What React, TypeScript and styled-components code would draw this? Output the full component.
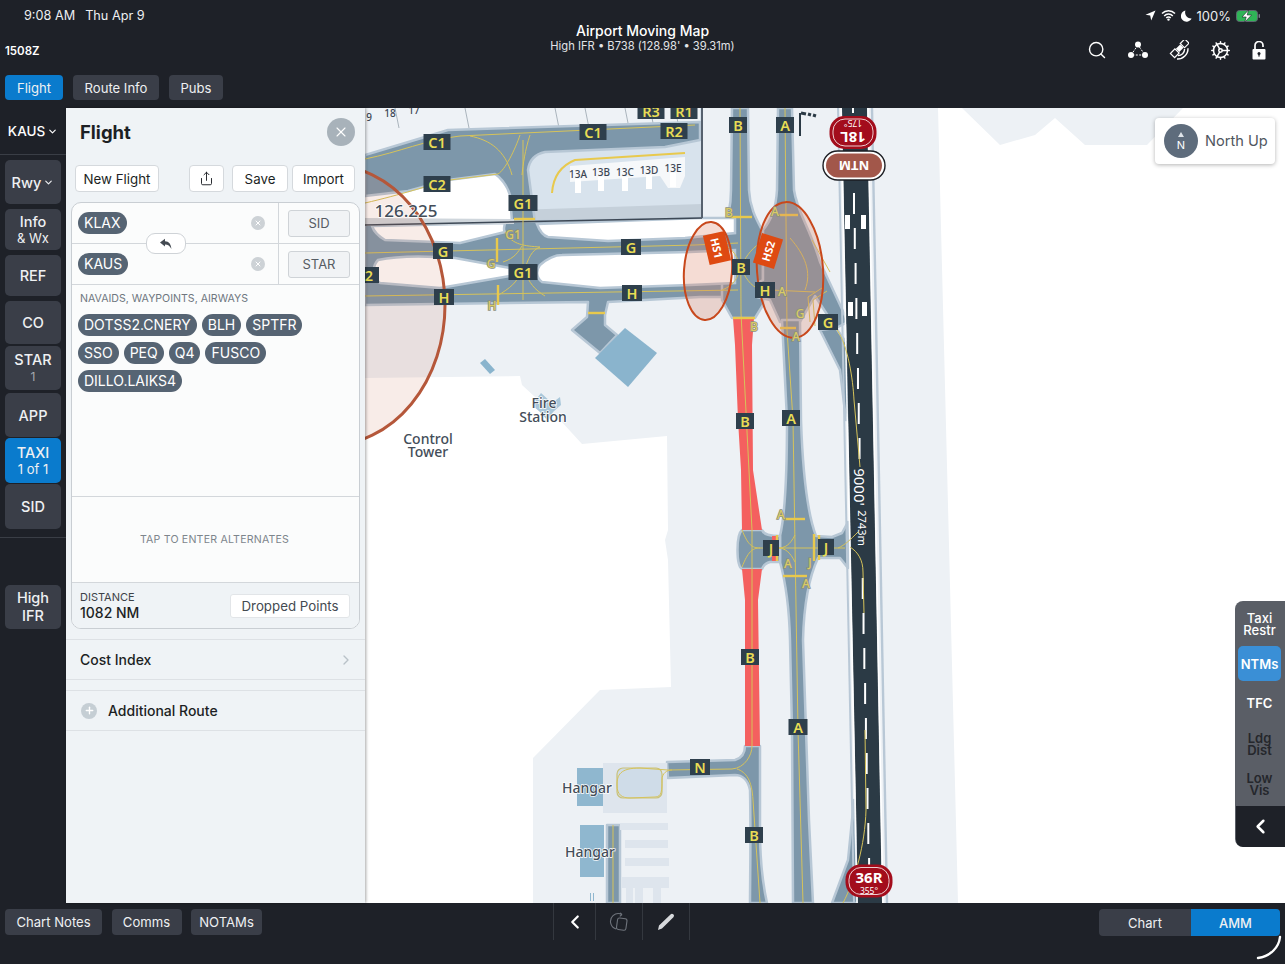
import React from "react";
import styled, { createGlobalStyle } from "styled-components";
import { ChevronDown, ChevronLeft, ChevronRight, Cog, Plus, Search, Share, X } from "lucide-react";

const GlobalStyle = createGlobalStyle`
  html, body {
    margin: 0;
    background: #1e2128;
  }
  * {
    box-sizing: border-box;
  }
`;

const RAIL_ITEMS = [
  { label: "Info", sub: "& Wx", h: 41, top: 5, solid: true },
  { label: "REF", h: 41, top: 5 },
  { label: "CO", h: 43, top: 5 },
  { label: "STAR", sub: "1", h: 44, top: 2 },
];

const ROUTE_ROWS = ["DOTSS2.CNERY", "BLH", "SPTFR", "SSO", "PEQ", "Q4", "FUSCO", "DILLO.LAIKS4"];

// dark taxiway signs: x, y, text, optional width
const SIGNS: [number, number, string, number?][] = [
  [437, 142, "C1"], [593, 132, "C1"], [651, 111, "R3"], [684, 111, "R1"], [674, 131, "R2"],
  [437, 184, "C2"], [523, 203, "G1", 29], [443, 251, "G", 20], [523, 272, "G1", 29], [631, 247, "G", 20],
  [444, 297, "H", 20], [632, 293, "H", 20], [369, 275, "2", 20], [738, 125, "B", 18], [785, 125, "A", 18],
  [741, 267, "B", 18], [765, 290, "H", 20], [828, 322, "G", 20], [745, 421, "B", 18], [791, 418, "A", 18],
  [771, 548, "J", 16], [826, 547, "J", 16], [750, 657, "B", 18], [798, 727, "A", 19], [700, 767, "N", 20],
  [754, 835, "B", 18],
];

const GROUND_LABELS: [number, number, string][] = [
  [513, 234, "G1"], [491, 263, "G"], [492, 305, "H"], [729, 212, "B"], [775, 211, "A"], [754, 326, "B"],
  [782, 291, "A"], [800, 313, "G"], [796, 336, "A"], [781, 514, "A"], [788, 563, "A"], [810, 562, "J"],
  [806, 583, "A"],
];

const GATES: [number, number, string][] = [
  [578, 174, "13A"], [601, 172, "13B"], [625, 172, "13C"], [649, 170, "13D"], [673, 168, "13E"],
];

const HOLD_BARS: [number, number, number, number][] = [
  [514, 219, 535, 219], [497, 238, 497, 262], [498, 285, 498, 305], [588, 313, 605, 313],
  [729, 217, 752, 217], [778, 215, 798, 215], [780, 328, 796, 328], [733, 318, 755, 318],
  [783, 519, 805, 519], [783, 576, 807, 576], [814, 534, 814, 561], [819, 535, 819, 560], [777, 535, 777, 561],
];

const CENTER_LINES = [
  "M365,159 C400,152 425,140 460,136 L695,125",
  "M365,203 C400,195 430,185 450,180 L498,174 C505,170 515,150 520,135 M523,140 L523,300",
  "M365,253 L695,245 L738,243 M365,296 L738,290",
  "M470,136 C490,140 505,150 512,175 M530,135 C525,150 523,165 522,175",
  "M505,232 C512,245 525,246 540,247 M503,262 C515,258 518,252 522,246 M540,247 C532,250 528,258 524,272",
  "M497,296 C510,288 518,282 520,272 M545,296 C535,290 528,282 526,272",
  "M740,108 L741,313 L752,530 L752,746 C752,755 745,768 732,769 L668,770 L640,768 C620,768 617,775 617,785 C617,795 622,798 630,798 L655,797 C662,797 662,790 662,780 C662,773 667,770 672,770",
  "M737,769 C746,772 752,780 753,800 L760,903",
  "M785,108 L787,330 L793,420 L798,730 L803,903",
  "M722,243 C735,250 737,258 741,267 M760,243 C750,250 745,258 741,267 M722,290 C735,285 737,278 741,267 M760,290 C750,285 745,278 741,267",
  "M742,530 C748,545 752,548 760,548 M742,567 C748,552 752,548 760,548 L845,548 M795,535 C790,545 785,548 778,548 M795,562 C790,552 785,548 778,548 M838,548 C845,545 850,540 858,532",
  "M812,240 L830,272 M790,238 C805,255 812,272 805,290 M770,290 L815,292",
  "M810,322 L808,297 L822,288 M815,326 L813,300 L827,291",
  "M613,825 L613,903",
  "M837,330 C848,345 853,380 854,400 L860,467 M850,547 C858,552 863,560 863,572 L864,613",
  "M865,730 L866,810 C865,845 855,880 843,903",
];

const ISLANDS = [
  "M372,226 L505,223 C504,228 503,230 505,232 L460,243 L385,240 C378,236 374,232 372,226 Z",
  "M378,260 C400,255 430,256 455,258 L510,268 L510,276 L440,288 L380,283 C372,278 372,266 378,260 Z",
  "M537,224 C540,232 544,236 548,237 L608,241 L685,238 L735,233 L735,218 L700,218 Z",
  "M540,265 C548,258 555,255 562,255 L690,252 L735,250 L735,283 L690,285 L600,288 L542,282 C536,278 536,270 540,265 Z",
];

const TAXIWAYS = [
  "M365,155 L448,130 L700,122 L700,140 L665,147 L545,152 Q530,155 528,170 L535,222 L512,222 L510,195 Q505,180 495,174 L448,180 L408,191 L365,196 Z",
  "M365,224 L740,218 L740,297 L700,297 L608,302 L605,315 L605,325 L617,335 L600,353 L572,330 L587,317 L588,302 L365,305 Z",
  "M732,108 L748,108 L749,190 C750,210 758,222 763,232 L763,305 L755,318 L732,318 L722,300 L722,232 C728,220 731,205 731,190 Z",
  "M778,108 L792,108 L794,190 C797,212 810,228 820,262 L848,322 L836,328 L815,296 L800,322 L780,322 L770,300 L757,297 L757,283 L763,280 L763,230 C770,222 776,208 777,190 Z",
  "M782,320 L800,320 L801,420 C803,480 808,515 816,536 L832,537 L842,533 L848,522 L848,568 L840,558 L818,558 C810,575 804,600 803,640 L806,730 L809,820 L813,903 L793,903 L792,730 L790,640 C789,600 785,580 780,562 L780,536 C785,515 787,480 787,420 Z",
  "M742,530 L762,530 C764,535 770,536 780,536 L780,562 L770,562 C766,563 763,566 762,569 L742,569 C736,565 736,535 742,530 Z",
  "M745,746 L760,746 L760,830 C760,860 763,885 767,903 L750,903 C750,880 751,840 750,790 C748,780 742,775 735,775 L668,778 L667,762 L735,760 C742,758 745,754 745,746 Z",
  "M820,330 L836,328 L848,345 L850,420 L846,420 L840,370 Z",
  "M832,903 L848,860 L854,800 L858,903 Z",
  "M607,825 L620,825 L620,903 L607,903 Z",
];

const RED_SEGMENTS = [
  "M733,318 L754,318 L752,345 L753,470 L762,530 L742,530 L741,470 L738,420 L735,345 Z",
  "M742,569 L762,569 L758,600 L760,746 L745,746 L745,600 Z",
];

const RUNWAY_DASHES = Array.from({ length: 20 }, (_, i) => 193 + i * 35).filter(
  (y) => y < 460 || y > 565
);

const GATE_BARS: [number, number, number, number][] = [
  [620, 823, 48, 7], [625, 840, 43, 8], [625, 858, 44, 8], [622, 877, 47, 11],
  [626, 888, 7, 15], [635, 888, 8, 15], [653, 888, 8, 15],
];

function AirportMap() {
  return (
    <MapSvg viewBox="365 108 920 795">
      <rect x="365" y="108" width="920" height="795" fill="#fff" />
      <polygon
        fill="#edf1f5"
        points="365,108 938,108 958,903 533,903 533,758 600,690 671,687 668,560 665,540 668,530 667,436 582,444 560,420 522,385 520,376 365,378"
      />
      <polygon fill="#edf1f5" points="962,108 1000,145 1035,135 1055,118 1085,145 1147,145 1183,108" />

      <polygon fill="#d8e3ed" points="365,108 702,108 702,218 365,225" />
      <polygon fill="#eef2f6" points="365,108 700,108 700,122 448,130 365,155" />
      <polygon fill="#fff" points="365,196 448,181 495,174 512,195 514,222 365,225" />
      <polygon fill="#c5d0da" points="515,210 702,204 702,218 515,222" />
      <polygon fill="#f6f8fa" points="570,166 685,157 685,176 680,188 668,188 660,176 570,182" />
      {GATES.map(([x, y]) => (
        <rect key={x} x={x - 3} y={y + 5} width="6" height="14" fill="#fff" />
      ))}
      <path d="M552,193 C553,178 560,166 575,160 L685,153" fill="none" stroke="#e8c94d" strokeWidth="2" />
      {[395, 465, 555, 585, 625, 650, 675].map((x) => (
        <line key={x} x1={x} y1="108" x2={x + 4} y2="128" stroke="#aab4bd" strokeWidth="1" />
      ))}

      {TAXIWAYS.map((d) => (
        <TaxiShape key={d} d={d} />
      ))}
      {ISLANDS.map((d) => (
        <path key={d} d={d} fill="#fff" stroke="#b7c7d5" strokeWidth="2.5" />
      ))}
      <polygon fill="#cfd6dc" points="365,218 514,219 514,224 365,226" />
      <line x1="365" y1="225" x2="702" y2="218" stroke="#3d4855" strokeWidth="1.6" />
      <line x1="702" y1="108" x2="702" y2="218" stroke="#56616e" strokeWidth="2" />
      {RED_SEGMENTS.map((d) => (
        <path key={d} d={d} fill="#f4605f" />
      ))}
      <rect x="772" y="536" width="6" height="25" fill="#f4605f" />

      <polygon fill="#8ab4cd" points="625,328 657,353 628,387 595,358" />
      <polygon fill="#8ab4cd" points="480,363 485,359 495,370 490,374" />
      <polygon fill="#a9c7da" points="541,393 552,403 560,397 561,405 553,412 548,421 540,412 532,405" />

      <rect x="603" y="763" width="64" height="50" fill="#dee5ed" />
      <rect x="577" y="768" width="26" height="38" fill="#8fb7cf" />
      <rect x="617" y="768" width="45" height="30" rx="6" fill="#cfdce8" stroke="#c9c27a" strokeWidth="1.2" />
      <rect x="580" y="825" width="24" height="52" fill="#8fb7cf" />
      {GATE_BARS.map(([x, y, w, h]) => (
        <rect key={`${x}-${y}`} x={x} y={y} width={w} height={h} fill="#dee5ed" />
      ))}

      <line x1="838" y1="108" x2="854" y2="903" stroke="#b9c8d6" strokeWidth="2" />
      <polygon fill="#2b3a45" points="842,108 867,108 882,903 858,903" />
      <line x1="841" y1="108" x2="857" y2="903" stroke="#fff" strokeWidth="1.4" />
      <line x1="868" y1="108" x2="883" y2="903" stroke="#fff" strokeWidth="1.4" />
      <line x1="872" y1="108" x2="887" y2="903" stroke="#b9c8d6" strokeWidth="2.4" />
      {RUNWAY_DASHES.map((y) => (
        <rect key={y} x={854 + (y - 193) * 0.0227 - 1} y={y} width="2" height="21" fill="#fff" />
      ))}
      <rect x="852" y="108" width="2" height="5" fill="#fff" />
      {[[845, 215], [861, 215], [848, 302], [862, 302]].map(([x, y]) => (
        <rect key={`${x}-${y}`} x={x} y={y} width="5" height="14" fill="#fff" />
      ))}
      <RunwayText transform="translate(860 487) rotate(90)" $size={15}>9000&apos;</RunwayText>
      <RunwayText transform="translate(862 528) rotate(90)" $size={11}>2743m</RunwayText>

      {CENTER_LINES.map((d) => (
        <path key={d} d={d} fill="none" stroke="#d6c35a" strokeWidth="1" />
      ))}
      {HOLD_BARS.map(([x1, y1, x2, y2]) => (
        <line key={`${x1}-${y1}`} x1={x1} y1={y1} x2={x2} y2={y2} stroke="#e8c94d" strokeWidth="2.4" />
      ))}

      <ellipse cx="330" cy="305" rx="115" ry="140" fill="#c86e50" fillOpacity=".13" stroke="#b5573a" strokeWidth="3" />
      <ellipse cx="708" cy="271" rx="24" ry="49" transform="rotate(4 708 271)" fill="#dc8264" fillOpacity=".28" stroke="#c8481c" strokeWidth="2" />
      <ellipse cx="790" cy="270" rx="33" ry="68" transform="rotate(-4 790 270)" fill="#dc8264" fillOpacity=".28" stroke="#c8481c" strokeWidth="2" />

      <g transform="translate(717 248) rotate(-13)">
        <rect x="-11" y="-15" width="22" height="30" fill="#de4a12" />
        <HotspotText transform="rotate(90)">HS1</HotspotText>
      </g>
      <g transform="translate(768 251) rotate(17)">
        <rect x="-11" y="-15.5" width="22" height="31" fill="#de4a12" />
        <HotspotText transform="rotate(-90)">HS2</HotspotText>
      </g>

      {SIGNS.map(([x, y, text, w = 27]) => (
        <g key={`${x}-${y}`}>
          <rect x={x - w / 2} y={y - 8} width={w} height="16" fill="#2e3f4c" />
          <SignText x={x} y={y}>{text}</SignText>
        </g>
      ))}
      {GROUND_LABELS.map(([x, y, text]) => (
        <GroundText key={`${x}-${y}`} x={x} y={y}>{text}</GroundText>
      ))}
      {GATES.map(([x, y, text]) => (
        <GateText key={text} x={x} y={y}>{text}</GateText>
      ))}
      <GateText x={369} y={117}>9</GateText>
      <GateText x={390} y={113}>18</GateText>
      <GateText x={414} y={110}>17</GateText>

      <MapLabel x={406} y={217} $size={17}>126.225</MapLabel>
      <MapLabel x={428} y={444}>Control</MapLabel>
      <MapLabel x={428} y={457}>Tower</MapLabel>
      <MapLabel x={544} y={408}>Fire</MapLabel>
      <MapLabel x={543} y={422}>Station</MapLabel>
      <MapLabel x={587} y={793}>Hangar</MapLabel>
      <MapLabel x={590} y={857}>Hangar</MapLabel>

      <path d="M800,113 L800,136" stroke="#2b3a45" strokeWidth="2" />
      <path d="M801,113 L806,114 M808,114 L811,115 M813,115 L816,116" stroke="#2b3a45" strokeWidth="3" />
      <rect x="590" y="893" width="1" height="8" fill="#8fb7cf" />
      <rect x="593" y="893" width="1" height="8" fill="#8fb7cf" />

      <g transform="translate(853 132.5) rotate(180)">
        <rect x="-23.5" y="-16.5" width="47" height="33" rx="15" fill="#a30d1c" />
        <rect x="-20" y="-13.5" width="40" height="27" rx="12" fill="none" stroke="#fff" strokeWidth=".8" />
        <PillText y={-5} $size={15}>18L</PillText>
        <PillText y={9} $size={8.5}>175°</PillText>
      </g>
      <g transform="translate(854 165.5) rotate(180)">
        <rect x="-31" y="-14.5" width="62" height="29" rx="14.5" fill="#fff" stroke="#1b1d22" strokeWidth="1.4" />
        <rect x="-28" y="-12" width="56" height="24" rx="12" fill="#a2574a" />
        <PillText $size={13}>NTM</PillText>
      </g>
      <g transform="translate(869 881)">
        <rect x="-23.5" y="-16.5" width="47" height="33" rx="15" fill="#a30d1c" />
        <rect x="-20" y="-13.5" width="40" height="27" rx="12" fill="none" stroke="#fff" strokeWidth=".8" />
        <PillText y={-4} $size={15}>36R</PillText>
        <PillText y={9} $size={8.5}>355°</PillText>
      </g>
    </MapSvg>
  );
}

function TriangleNodes() {
  return (
    <svg width="20" height="18" viewBox="0 0 20 18">
      <path d="M10 4 L3 14 L17 14 Z" fill="none" stroke="#fff" strokeWidth="1" strokeDasharray="2 1.4" />
      <circle cx="10" cy="3.6" r="3" fill="#fff" />
      <circle cx="3" cy="14" r="3" fill="#fff" />
      <circle cx="17" cy="14" r="3" fill="#fff" />
    </svg>
  );
}

function SatelliteLink() {
  return (
    <svg width="20" height="20" viewBox="0 0 20 20" fill="none" stroke="#fff">
      <g transform="rotate(45 10 9)">
        <rect x="7" y="-2.2" width="6" height="6.4" strokeWidth="1.2" />
        <rect x="7.6" y="5" width="4.8" height="6" fill="#fff" stroke="none" />
        <rect x="7" y="11.8" width="6" height="6.4" strokeWidth="1.2" />
      </g>
      <path d="M9 15.6 A6.6 6.6 0 0 0 15.6 9 M8 19 A10.5 10.5 0 0 0 19 8.2" strokeWidth="1.4" />
    </svg>
  );
}

function OpenLock() {
  return (
    <svg width="14" height="19" viewBox="0 0 14 19">
      <path d="M3 8 V4.5 A4 4 0 0 1 11 4.5 V6" fill="none" stroke="#fff" strokeWidth="1.7" />
      <path d="M1.5 8 H12.5 A1 1 0 0 1 13.5 9 V17.5 A1 1 0 0 1 12.5 18.5 H1.5 A1 1 0 0 1 .5 17.5 V9 A1 1 0 0 1 1.5 8 Z" fill="#fff" />
      <circle cx="7" cy="12.6" r="1.5" fill="#1e2128" />
      <rect x="6.4" y="13" width="1.2" height="2.6" fill="#1e2128" />
    </svg>
  );
}

function StatusIcons() {
  return (
    <StatusGroup>
      <svg width="11" height="11" viewBox="0 0 11 11">
        <path d="M10.5 .5 L.5 4.8 L5.2 5.6 L6.2 10.5 Z" fill="#fff" />
      </svg>
      <svg width="15" height="11" viewBox="0 0 15 11">
        <path d="M1 3.6 A9 9 0 0 1 14 3.6 M3.2 5.9 A6 6 0 0 1 11.8 5.9 M5.3 8 A3 3 0 0 1 9.7 8" fill="none" stroke="#fff" strokeWidth="1.5" />
        <circle cx="7.5" cy="9.6" r="1.2" fill="#fff" />
      </svg>
      <svg width="11" height="12" viewBox="0 0 11 12">
        <path d="M4.4 .6 A5.6 5.6 0 1 0 10.6 8.4 A6 6 0 0 1 4.4 .6 Z" fill="#fff" />
      </svg>
      <StatusText>100%</StatusText>
      <svg width="25" height="12" viewBox="0 0 25 12">
        <rect x=".5" y=".5" width="21" height="11" rx="3" fill="#2fb457" stroke="#5f6670" />
        <rect x="22.6" y="4" width="1.4" height="4" rx=".7" fill="#7a818a" />
        <path d="M12.5 0 L6 7 H10.2 L8.8 12 L15.6 5 H11.2 Z" fill="#fff" stroke="#1e2128" strokeWidth=".6" />
      </svg>
    </StatusGroup>
  );
}

export default function App() {
  return (
    <>
      <GlobalStyle />
      <Screen>
        <TopBar>
          <TopGrid>
            <TopLeft>
              <TimeRow>
                <span>9:08 AM</span>
                <span>Thu Apr 9</span>
              </TimeRow>
              <Zulu>1508Z</Zulu>
            </TopLeft>
            <TitleBlock>
              <Title>Airport Moving Map</Title>
              <Subtitle>High IFR • B738 (128.98&apos; • 39.31m)</Subtitle>
            </TitleBlock>
            <TopRight>
              <StatusIcons />
              <ToolRow>
                <Search size={20} color="#fff" strokeWidth={1.7} />
                <TriangleNodes />
                <SatelliteLink />
                <Cog size={21} color="#fff" strokeWidth={1.7} />
                <OpenLock />
              </ToolRow>
            </TopRight>
          </TopGrid>
          <TabRow>
            <DarkButton $active $w={58}>Flight</DarkButton>
            <DarkButton $w={86}>Route Info</DarkButton>
            <DarkButton $w={54}>Pubs</DarkButton>
          </TabRow>
        </TopBar>

        <Body>
          <Rail>
            <AirportPicker>
              KAUS <ChevronDown size={11} strokeWidth={2.5} />
            </AirportPicker>
            <RailButton $h={44} $top={5}>
              <RailInline>
                Rwy <ChevronDown size={11} strokeWidth={2.5} />
              </RailInline>
            </RailButton>
            {RAIL_ITEMS.map((item) => (
              <RailButton key={item.label} $h={item.h} $top={item.top}>
                {item.label}
                {item.sub && <RailSub $solid={item.solid}>{item.sub}</RailSub>}
              </RailButton>
            ))}
            <RailButton $h={44} $top={3}>APP</RailButton>
            <RailButton $h={45} $top={1} $active>
              TAXI
              <RailSub $solid>1 of 1</RailSub>
            </RailButton>
            <RailButton $h={45} $top={1}>SID</RailButton>
            <RailDivider />
            <RailButton $h={44} $top={47} $tall>
              High
              <RailSub $solid $large>IFR</RailSub>
            </RailButton>
          </Rail>

          <Panel>
            <PanelHeader>
              <PanelTitle>Flight</PanelTitle>
              <CloseButton>
                <X size={16} color="#fff" strokeWidth={1.6} />
              </CloseButton>
            </PanelHeader>
            <ActionRow>
              <ActionButton $w={84}>New Flight</ActionButton>
              <Spacer />
              <ActionButton $w={35}>
                <Share size={15} strokeWidth={1.5} />
              </ActionButton>
              <ActionButton $w={56} $gap={4}>Save</ActionButton>
              <ActionButton $w={63}>Import</ActionButton>
            </ActionRow>

            <RouteCard>
              <EndpointRow>
                <EndpointField>
                  <Chip>KLAX</Chip>
                  <ClearDot>
                    <X size={8} color="#fff" strokeWidth={3} />
                  </ClearDot>
                </EndpointField>
                <ProcedureCell>
                  <ProcedureButton>SID</ProcedureButton>
                </ProcedureCell>
              </EndpointRow>
              <EndpointRow>
                <EndpointField>
                  <Chip>KAUS</Chip>
                  <ClearDot>
                    <X size={8} color="#fff" strokeWidth={3} />
                  </ClearDot>
                </EndpointField>
                <ProcedureCell>
                  <ProcedureButton>STAR</ProcedureButton>
                </ProcedureCell>
              </EndpointRow>
              <SwapButton>
                <svg width="14" height="12" viewBox="0 0 14 12">
                  <path d="M1 4.5 L6 .8 V3.2 C10 3.2 12 6 12.4 11 C10.8 8 9 6.6 6 6.6 V8.6 Z" fill="#444a52" />
                </svg>
              </SwapButton>
              <RouteSection>
                <SectionLabel>NAVAIDS, WAYPOINTS, AIRWAYS</SectionLabel>
                <ChipWrap>
                  {ROUTE_ROWS.map((wp) => (
                    <Chip key={wp}>{wp}</Chip>
                  ))}
                </ChipWrap>
              </RouteSection>
              <AlternatesRow>TAP TO ENTER ALTERNATES</AlternatesRow>
              <DistanceFooter>
                <div>
                  <DistanceLabel>DISTANCE</DistanceLabel>
                  <DistanceValue>1082 NM</DistanceValue>
                </div>
                <DroppedButton>Dropped Points</DroppedButton>
              </DistanceFooter>
            </RouteCard>

            <ListRow>
              <span>Cost Index</span>
              <ChevronRight size={16} color="#b9c1c8" strokeWidth={2} />
            </ListRow>
            <ListRow $start>
              <PlusDot>
                <Plus size={11} color="#fff" strokeWidth={3} />
              </PlusDot>
              <span>Additional Route</span>
            </ListRow>
          </Panel>

          <MapArea>
            <AirportMap />
            <NorthUpCard>
              <Compass>
                <CompassArrow />
                N
              </Compass>
              North Up
            </NorthUpCard>
            <SideTabs>
              <SideTab $h={45}>Taxi<br />Restr</SideTab>
              <SideTabActive>NTMs</SideTabActive>
              <SideTab $h={43} $strong>TFC</SideTab>
              <SideTab $h={40} $dim>Ldg<br />Dist</SideTab>
              <SideTab $h={40} $dim>Low<br />Vis</SideTab>
              <SideCollapse>
                <ChevronLeft size={23} color="#fff" strokeWidth={2.6} />
              </SideCollapse>
            </SideTabs>
          </MapArea>
        </Body>

        <BottomBar>
          <BottomLeft>
            <DarkButton $w={97} $h={26}>Chart Notes</DarkButton>
            <DarkButton $w={70} $h={26}>Comms</DarkButton>
            <DarkButton $w={71} $h={26}>NOTAMs</DarkButton>
          </BottomLeft>
          <ToolStrip>
            <ToolCell $w={42}>
              <ChevronLeft size={22} color="#fff" strokeWidth={2.4} />
            </ToolCell>
            <ToolCell $w={47}>
              <svg width="20" height="20" viewBox="0 0 20 20" fill="none" stroke="#6f747c" strokeWidth="1.1">
                <path d="M7 17 A8 8 0 0 1 4 3.6 A8 8 0 0 1 13 2.5 L11 .8 M13 2.5 L10.8 4.4" />
                <rect x="8" y="6.4" width="9.5" height="11.5" rx="2" transform="rotate(8 13 12)" />
              </svg>
            </ToolCell>
            <ToolCell $w={47}>
              <svg width="20" height="20" viewBox="0 0 20 20">
                <path d="M2 18 L3 13.6 L14.5 2.4 A1.6 1.6 0 0 1 17.4 5.2 L6 16.6 Z" fill="#d7d9dc" />
              </svg>
            </ToolCell>
          </ToolStrip>
          <BottomRight>
            <Segmented>
              <Segment>Chart</Segment>
              <Segment $active>AMM</Segment>
            </Segmented>
          </BottomRight>
          <HomeArc width="26" height="26" viewBox="0 0 26 26">
            <path d="M24 2 C23 12 15 21 2 23" fill="none" stroke="#fff" strokeWidth="2.4" strokeLinecap="round" />
          </HomeArc>
        </BottomBar>
      </Screen>
    </>
  );
}

const Screen = styled.div`
  position: relative;
  width: 1285px;
  height: 964px;
  overflow: hidden;
  display: flex;
  flex-direction: column;
  background: #1e2128;
  color: #fff;
  font-family: Inter, "Liberation Sans", sans-serif;
`;

const TopBar = styled.header`
  height: 108px;
  flex: none;
  display: flex;
  flex-direction: column;
`;

const TopGrid = styled.div`
  height: 75px;
  display: grid;
  grid-template-columns: 1fr 300px 1fr;
`;

const TopLeft = styled.div`
  display: flex;
  flex-direction: column;
`;

const TimeRow = styled.div`
  display: flex;
  gap: 10px;
  margin: 7px 0 0 24px;
  font-size: 12.7px;
  line-height: 17px;
  color: #eceef0;
`;

const Zulu = styled.div`
  margin: 20px 0 0 5px;
  font-size: 11.5px;
  font-weight: 600;
  line-height: 14px;
`;

const TitleBlock = styled.div`
  padding-top: 22px;
  text-align: center;
`;

const Title = styled.div`
  font-size: 14px;
  font-weight: 500;
  line-height: 17px;
`;

const Subtitle = styled.div`
  font-size: 11.2px;
  line-height: 15px;
  color: #e2e4e7;
`;

const TopRight = styled.div`
  display: flex;
  flex-direction: column;
  align-items: flex-end;
`;

const StatusGroup = styled.div`
  display: flex;
  align-items: center;
  gap: 5px;
  height: 17px;
  margin: 7px 24px 0 0;
`;

const StatusText = styled.span`
  font-size: 13px;
  color: #eceef0;
`;

const ToolRow = styled.div`
  display: flex;
  align-items: center;
  gap: 21px;
  height: 22px;
  margin: 15px 19px 0 0;
`;

const TabRow = styled.nav`
  display: flex;
  gap: 10px;
  padding-left: 5px;
`;

const DarkButton = styled.div<{ $active?: boolean; $w: number; $h?: number }>`
  width: ${(p) => p.$w}px;
  height: ${(p) => p.$h ?? 25}px;
  display: flex;
  align-items: center;
  justify-content: center;
  border-radius: 4px;
  font-size: 13.1px;
  color: #eef0f2;
  background: ${(p) => (p.$active ? "#0a7bcd" : "#3a3e48")};
`;

const Body = styled.main`
  height: 795px;
  flex: none;
  display: flex;
`;

const Rail = styled.aside`
  width: 66px;
  flex: none;
  display: flex;
  flex-direction: column;
  padding: 0 5px;
`;

const AirportPicker = styled.div`
  height: 47px;
  margin: 0 -5px;
  display: flex;
  align-items: center;
  justify-content: center;
  gap: 2px;
  font-size: 13.5px;
  font-weight: 500;
  border-bottom: 1px solid #3a3e46;
`;

const RailButton = styled.div<{ $h: number; $top: number; $active?: boolean; $tall?: boolean }>`
  height: ${(p) => p.$h}px;
  flex: none;
  margin-top: ${(p) => p.$top}px;
  display: flex;
  flex-direction: column;
  align-items: center;
  justify-content: center;
  border-radius: 5px;
  font-size: 14.5px;
  font-weight: 500;
  line-height: ${(p) => (p.$tall ? "18px" : "17px")};
  color: #eef0f2;
  background: ${(p) => (p.$active ? "#0a7bcd" : "#3a3e48")};
`;

const RailInline = styled.span`
  display: flex;
  align-items: center;
  gap: 2px;
`;

const RailSub = styled.span<{ $solid?: boolean; $large?: boolean }>`
  font-size: ${(p) => (p.$solid && !p.$large ? "13px" : p.$large ? "14.5px" : "12px")};
  color: ${(p) => (p.$solid ? "#eef0f2" : "#a5a9af")};
  font-weight: ${(p) => (p.$large ? 500 : 400)};
`;

const RailDivider = styled.div`
  height: 1px;
  flex: none;
  margin: 8px -5px 0;
  background: #3a3e46;
`;

const Panel = styled.section`
  position: relative;
  z-index: 2;
  width: 299px;
  flex: none;
  background: #eff3f6;
  color: #1c1f24;
  box-shadow: 1px 0 3px rgba(0, 0, 0, 0.35);
  display: flex;
  flex-direction: column;
`;

const PanelHeader = styled.div`
  height: 48px;
  display: flex;
  align-items: center;
  justify-content: space-between;
  padding: 0 10px 0 14px;
`;

const PanelTitle = styled.h1`
  margin: 0;
  font-size: 18.5px;
  font-weight: 700;
`;

const CloseButton = styled.div`
  width: 28px;
  height: 28px;
  border-radius: 50%;
  background: #a8b2ba;
  display: flex;
  align-items: center;
  justify-content: center;
`;

const ActionRow = styled.div`
  display: flex;
  align-items: center;
  gap: 4px;
  padding: 9px 10px 0 9px;
`;

const Spacer = styled.div`
  flex: 1;
`;

const ActionButton = styled.div<{ $w: number; $gap?: number }>`
  width: ${(p) => p.$w}px;
  height: 27px;
  margin-left: ${(p) => p.$gap ?? 0}px;
  display: flex;
  align-items: center;
  justify-content: center;
  background: #fff;
  border: 1px solid #d5d9dd;
  border-radius: 4px;
  font-size: 13.3px;
`;

const RouteCard = styled.div`
  position: relative;
  height: 427px;
  margin: 10px 5px 0 5px;
  background: #fbfcfc;
  border: 1px solid #c9ced3;
  border-radius: 10px;
  display: flex;
  flex-direction: column;
  overflow: hidden;
`;

const EndpointRow = styled.div`
  height: 41px;
  flex: none;
  display: flex;
  border-bottom: 1px solid #d3d7db;
`;

const EndpointField = styled.div`
  width: 207px;
  display: flex;
  align-items: center;
  justify-content: space-between;
  padding: 0 13px 0 6px;
  border-right: 1px solid #d3d7db;
`;

const Chip = styled.span`
  display: inline-flex;
  align-items: center;
  height: 22px;
  padding: 0 6px;
  border-radius: 11px;
  background: #566473;
  color: #fff;
  font-size: 14px;
  line-height: 22px;
`;

const ClearDot = styled.span`
  width: 14px;
  height: 14px;
  border-radius: 50%;
  background: #cdd2d6;
  display: flex;
  align-items: center;
  justify-content: center;
`;

const ProcedureCell = styled.div`
  flex: 1;
  display: flex;
  align-items: center;
  justify-content: center;
`;

const ProcedureButton = styled.div`
  width: 62px;
  height: 27px;
  display: flex;
  align-items: center;
  justify-content: center;
  background: #f1f3f5;
  border: 1px solid #cfd3d7;
  border-radius: 3px;
  font-size: 13px;
  color: #565c63;
`;

const SwapButton = styled.div`
  position: absolute;
  left: 74px;
  top: 30px;
  width: 40px;
  height: 21px;
  background: #fff;
  border: 1px solid #cfd3d7;
  border-radius: 9px;
  display: flex;
  align-items: center;
  justify-content: center;
`;

const RouteSection = styled.div`
  height: 212px;
  flex: none;
  padding: 8px 6px 0;
  border-bottom: 1px solid #d3d7db;
`;

const SectionLabel = styled.div`
  padding-left: 2px;
  font-size: 10.6px;
  line-height: 12px;
  color: #6f777f;
`;

const ChipWrap = styled.div`
  display: flex;
  flex-wrap: wrap;
  gap: 6px 5px;
  margin-top: 9px;
  width: 240px;
`;

const AlternatesRow = styled.div`
  height: 86px;
  flex: none;
  display: flex;
  align-items: center;
  justify-content: center;
  padding-right: 2px;
  font-size: 10.6px;
  letter-spacing: 0.2px;
  color: #7d858c;
  border-bottom: 1px solid #d3d7db;
`;

const DistanceFooter = styled.div`
  flex: 1;
  display: flex;
  align-items: center;
  justify-content: space-between;
  padding: 0 9px 0 8px;
  background: #eff3f6;
`;

const DistanceLabel = styled.div`
  font-size: 11px;
  line-height: 13px;
  color: #3d4248;
`;

const DistanceValue = styled.div`
  font-size: 14px;
  font-weight: 500;
  line-height: 17px;
`;

const DroppedButton = styled.div`
  width: 120px;
  height: 24px;
  display: flex;
  align-items: center;
  justify-content: center;
  background: #fff;
  border: 1px solid #e2e5e8;
  border-radius: 3px;
  font-size: 13.3px;
  color: #444a51;
`;

const ListRow = styled.div<{ $start?: boolean }>`
  height: 41px;
  margin-top: 10px;
  flex: none;
  display: flex;
  align-items: center;
  justify-content: ${(p) => (p.$start ? "flex-start" : "space-between")};
  gap: 11px;
  padding: 0 11px 0 ${(p) => (p.$start ? "15px" : "14px")};
  border-top: 1px solid #dde1e5;
  border-bottom: 1px solid #dde1e5;
  font-size: 14px;
  font-weight: 500;
`;

const PlusDot = styled.span`
  width: 16px;
  height: 16px;
  border-radius: 50%;
  background: #c5ced4;
  display: flex;
  align-items: center;
  justify-content: center;
`;

const MapArea = styled.div`
  position: relative;
  flex: 1;
  overflow: hidden;
`;

const MapSvg = styled.svg`
  display: block;
  width: 920px;
  height: 795px;
  font-family: "Noto Sans", sans-serif;
`;

const TaxiShape = styled.path`
  fill: #7d97aa;
  stroke: #b7c7d5;
  stroke-width: 2.5px;
  stroke-linejoin: round;
`;

const SignText = styled.text`
  font-size: 14.5px;
  font-weight: 600;
  fill: #e8dc55;
  text-anchor: middle;
  dominant-baseline: central;
`;

const GroundText = styled.text`
  font-size: 12px;
  font-weight: 500;
  fill: #d9cb66;
  stroke: #8c8f80;
  stroke-width: 1.5px;
  paint-order: stroke;
  text-anchor: middle;
  dominant-baseline: central;
`;

const GateText = styled.text`
  font-size: 10px;
  font-weight: 500;
  fill: #3c4653;
  text-anchor: middle;
  dominant-baseline: central;
`;

const MapLabel = styled.text<{ $size?: number }>`
  font-size: ${(p) => p.$size ?? 14}px;
  font-weight: 500;
  fill: #434d59;
  stroke: #fff;
  stroke-width: 1.5px;
  paint-order: stroke;
  text-anchor: middle;
`;

const RunwayText = styled.text<{ $size: number }>`
  font-size: ${(p) => p.$size}px;
  fill: #fff;
  text-anchor: middle;
  dominant-baseline: central;
`;

const HotspotText = styled.text`
  font-size: 11px;
  font-weight: 700;
  fill: #fff;
  text-anchor: middle;
  dominant-baseline: central;
`;

const PillText = styled.text<{ $size: number }>`
  font-size: ${(p) => p.$size}px;
  font-weight: ${(p) => (p.$size > 10 ? 700 : 400)};
  fill: #fff;
  text-anchor: middle;
  dominant-baseline: central;
`;

const NorthUpCard = styled.div`
  position: absolute;
  top: 10px;
  right: 10px;
  width: 120px;
  height: 46px;
  display: flex;
  align-items: center;
  gap: 7px;
  padding-left: 9px;
  background: #fff;
  border-radius: 4px;
  box-shadow: 0 1px 4px rgba(0, 0, 0, 0.3);
  font-size: 14.6px;
  color: #50565e;
`;

const Compass = styled.div`
  width: 34px;
  height: 34px;
  flex: none;
  border-radius: 50%;
  background: #5e6c7c;
  display: flex;
  flex-direction: column;
  align-items: center;
  justify-content: center;
  gap: 2px;
  color: #fff;
  font-size: 11px;
  line-height: 12px;
`;

const CompassArrow = styled.span`
  width: 0;
  height: 0;
  border-left: 3px solid transparent;
  border-right: 3px solid transparent;
  border-bottom: 5px solid #dfe4e9;
`;

const SideTabs = styled.div`
  position: absolute;
  right: 0;
  top: 493px;
  width: 50px;
  height: 246px;
  background: #5a5e66;
  border-radius: 8px 0 0 8px;
  padding-left: 1px;
  display: flex;
  flex-direction: column;
  overflow: hidden;
`;

const SideTab = styled.div<{ $h: number; $dim?: boolean; $strong?: boolean }>`
  height: ${(p) => p.$h}px;
  flex: none;
  margin-right: 2px;
  display: flex;
  align-items: center;
  justify-content: center;
  text-align: center;
  font-size: 13px;
  line-height: 12px;
  font-weight: ${(p) => (p.$dim || p.$strong ? 600 : 500)};
  color: ${(p) => (p.$dim ? "#25272c" : "#fff")};
`;

const SideTabActive = styled.div`
  height: 35px;
  flex: none;
  margin: 0 4px 0 2px;
  display: flex;
  align-items: center;
  justify-content: center;
  border-radius: 5px;
  background: #3a8fd6;
  font-size: 13px;
  font-weight: 600;
`;

const SideCollapse = styled.div`
  flex: 1;
  margin-top: 2px;
  display: flex;
  align-items: center;
  justify-content: center;
  background: #1e2128;
  border-radius: 0 0 0 7px;
`;

const BottomBar = styled.footer`
  position: relative;
  flex: 1;
  display: grid;
  grid-template-columns: 553px 137px 1fr;
  align-items: start;
`;

const BottomLeft = styled.div`
  display: flex;
  gap: 9.5px;
  padding: 6px 0 0 5px;
`;

const ToolStrip = styled.div`
  display: flex;
  height: 37px;
  border-right: 1px solid #34383f;
`;

const ToolCell = styled.div<{ $w: number }>`
  width: ${(p) => p.$w}px;
  display: flex;
  align-items: center;
  justify-content: center;
  border-left: 1px solid #34383f;
`;

const BottomRight = styled.div`
  display: flex;
  justify-content: flex-end;
  padding: 6px 5px 0 0;
`;

const Segmented = styled.div`
  width: 181px;
  height: 27px;
  display: grid;
  grid-template-columns: 92px 89px;
  background: #3a3e48;
  border-radius: 4px;
  overflow: hidden;
`;

const Segment = styled.div<{ $active?: boolean }>`
  display: flex;
  align-items: center;
  justify-content: center;
  font-size: 13px;
  font-weight: ${(p) => (p.$active ? 500 : 400)};
  color: #eef0f2;
  background: ${(p) => (p.$active ? "#0a7bcd" : "transparent")};
`;

const HomeArc = styled.svg`
  position: absolute;
  right: 3px;
  bottom: 3px;
`;
